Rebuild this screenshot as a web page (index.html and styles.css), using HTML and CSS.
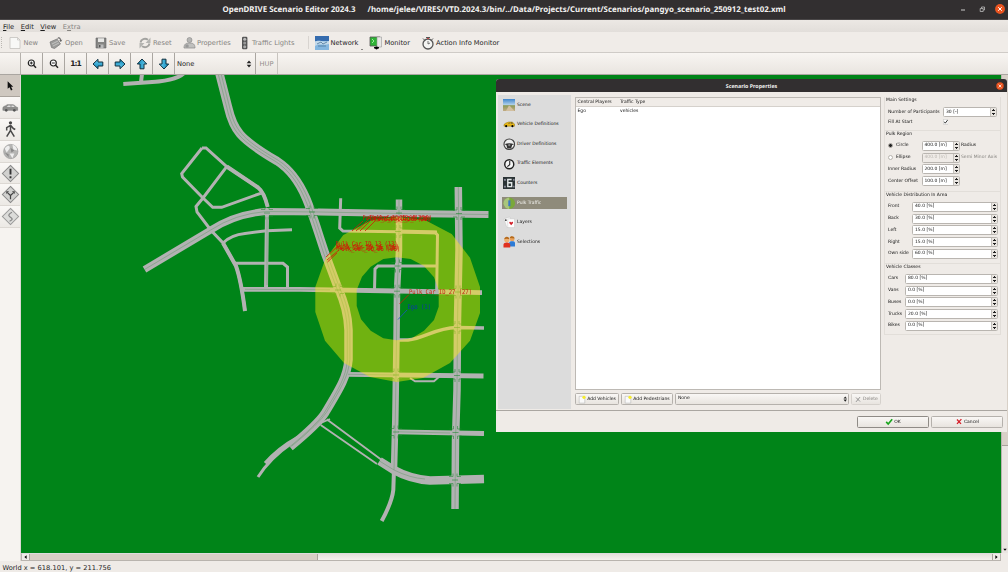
FILE: index.html
```html
<!DOCTYPE html>
<html lang="en">
<head>
<meta charset="utf-8">
<title>OpenDRIVE Scenario Editor</title>
<link rel="stylesheet" href="styles.css">
</head>
<body>
<svg class="defs" aria-hidden="true">
  <defs>
    <linearGradient id="cyan" x1="0" y1="0" x2="0" y2="1"><stop offset="0" stop-color="#6fd0f0"/><stop offset="1" stop-color="#0a86b8"/></linearGradient>
    <linearGradient id="sky" x1="0" y1="0" x2="0" y2="1"><stop offset="0" stop-color="#3f86cc"/><stop offset=".5" stop-color="#b4d3ea"/><stop offset=".55" stop-color="#8c9a58"/><stop offset="1" stop-color="#c2ab84"/></linearGradient>
  </defs>
  <symbol id="arrow" viewBox="0 0 12 12"><path d="M1 6 6 1.300V4h4.800v4H6v2.700Z" fill="url(#cyan)" stroke="#10303f" stroke-width="1"/></symbol>
  <symbol id="updown" viewBox="0 0 6 8"><path d="M3 .5 5.300 3.300H.7ZM3 7.500 5.300 4.700H.7Z" fill="#222"/></symbol>
  <symbol id="newdoc" viewBox="0 0 10 10"><path d="M1.500 1h7v8.500h-7Z" fill="#fafafa" stroke="#aaa" stroke-width=".6"/><circle cx="7.500" cy="2.300" r="2" fill="#f6ec2a"/></symbol>
</svg>
<div class="window">
  <header class="titlebar">
    <h1 class="window-title"><span>OpenDRIVE Scenario Editor 2024.3</span><span>/home/jelee/VIRES/VTD.2024.3/bin/../Data/Projects/Current/Scenarios/pangyo_scenario_250912_test02.xml</span></h1>
    <div class="window-buttons">
      <svg class="wb" viewBox="0 0 10 10"><path d="M3 6h4" stroke="#ddd" stroke-width=".9"/></svg>
      <svg class="wb" viewBox="0 0 10 10"><path d="M3.200 4.500h3v3h-3ZM4.500 4V3h3v3h-1" fill="none" stroke="#bbb" stroke-width=".8"/></svg>
      <svg class="wb" viewBox="0 0 10 10"><circle cx="5" cy="5" r="4.900" fill="#e95420"/><path d="m3.200 3.200 3.600 3.600m0-3.600L3.200 6.800" stroke="#fff" stroke-width="1"/></svg>
    </div>
  </header>
  <nav class="menubar"><span><u>F</u>ile</span><span><u>E</u>dit</span><span><u>V</u>iew</span><span class="off">E<u>x</u>tra</span></nav>
  <div class="toolbar">
    <i class="grip"></i>
    <span class="tool t-new off"><svg viewBox="0 0 14 14"><path d="M2 1.500h7.500L12 4v8.500H2Z" fill="#f8f8f6" stroke="#c4c2be" stroke-width=".8"/><path d="M9.500 1.500V4H12" fill="none" stroke="#c4c2be" stroke-width=".7"/></svg>New</span>
    <span class="tool t-open off"><svg viewBox="0 0 14 14"><path d="m1 6 7-3 3.500 5-6 4.500-3-1Z" fill="#9b9b99" stroke="#777" stroke-width=".7"/><path d="m3 8 6-3M4 10l6-3" stroke="#ccc" stroke-width=".8"/><path d="M8 3c1-3 4-2 4 1l1.300-.5L12 6l-2-1.500 1-.1C11 2.500 9.500 2 8 3" fill="#666"/></svg>Open</span>
    <span class="tool t-save off"><svg viewBox="0 0 14 14"><path d="M2 2h10v10H2Z" fill="#858583" stroke="#666" stroke-width=".6"/><path d="M4 2.300h6V6H4Z" fill="#e8e8e6"/><path d="M4.500 8.500h5V12h-5Z" fill="#bbb"/><path d="M5 9h1.500v2.500H5Z" fill="#555"/></svg>Save</span>
    <span class="tool t-reset off"><svg viewBox="0 0 14 14"><path d="M2.500 6.500C3 3 7 1.800 10 3.800M11.500 7.500C11 11 7 12.300 4 10.300" fill="none" stroke="#a3a3a0" stroke-width="1.900"/><path d="M12.500 1.500V7H7.600ZM1.500 12.500V7h5Z" fill="#b5b5b2"/></svg>Reset</span>
    <span class="tool t-prop off"><svg viewBox="0 0 14 14"><circle cx="7.500" cy="4" r="2.500" fill="#b5b5b3" stroke="#888" stroke-width=".6"/><path d="M2 12c0-4 2-5 5.500-5S13 8 13 12Z" fill="#c0c0be" stroke="#888" stroke-width=".7"/><circle cx="5" cy="10" r="1.800" fill="#999"/></svg>Properties</span>
    <span class="tool t-light off"><svg viewBox="0 0 14 14"><rect x="4" y=".8" width="5.400" height="12.400" rx="1.200" fill="#555"/><circle cx="6.700" cy="3.300" r="1.500" fill="#bbb"/><circle cx="6.700" cy="7" r="1.500" fill="#999"/><circle cx="6.700" cy="10.700" r="1.500" fill="#aaa"/></svg>Traffic Lights</span>
    <i class="sep"></i>
    <span class="tool t-net"><svg viewBox="0 0 14 14"><path d="M0 0h14v14H0Z" fill="#84b6df"/><path d="M0 0h14v5H0Z" fill="#366cae"/><path d="M0 6c4-3 8 1 14-1v3c-5 2-9-1-14 2Z" fill="#c3d9ea"/><path d="m2 8 4-2 2 2 4-2M3 10h8" fill="none" stroke="#4b7699" stroke-width=".8"/></svg>Network</span>
    <i class="drop"></i>
    <span class="tool t-mon"><svg viewBox="0 0 14 14"><path d="M1 1h10v9H1Z" fill="#2fb336" stroke="#555" stroke-width=".8"/><path d="m3 3 2 2-2 2" fill="none" stroke="#baf5b8" stroke-width=".8"/><path d="M8 1h4.500v10H8Z" fill="#e7e7e5" stroke="#999" stroke-width=".6"/><path d="M5 11h5v1.500H5Z" fill="#111"/><circle cx="7.500" cy="12" r="1.400"/></svg>Monitor</span>
    <span class="tool t-act"><svg viewBox="0 0 14 14"><circle cx="7" cy="8" r="5" fill="#f4f4f2" stroke="#555" stroke-width="1.300"/><path d="M7 8V5M7 8l2-1" stroke="#555" stroke-width=".8"/><path d="M7 1v2" stroke="#d22" stroke-width="1.300"/><path d="m2 2.500 2 2m8-2-2 2M5 1.500h4" stroke="#555" stroke-width="1"/></svg>Action Info Monitor</span>
  </div>
  <div class="viewbar">
    <i class="vpad"></i>
    <button class="vb"><svg viewBox="0 0 12 12"><circle cx="5.300" cy="5" r="3" fill="#fff" stroke="#222" stroke-width="1.200"/><path d="M7.600 7.300 10 9.800" stroke="#222" stroke-width="1.500"/><path d="M3.800 5h3M5.300 3.500v3" stroke="#111" stroke-width=".9"/></svg></button>
    <button class="vb"><svg viewBox="0 0 12 12"><circle cx="5.300" cy="5" r="3" fill="#fff" stroke="#222" stroke-width="1.200"/><path d="M7.600 7.300 10 9.800" stroke="#222" stroke-width="1.500"/><path d="M3.800 5h3" stroke="#111" stroke-width=".9"/></svg></button>
    <button class="vb"><b>1:1</b></button>
    <button class="vb"><svg><use href="#arrow"/></svg></button>
    <button class="vb"><svg class="r180"><use href="#arrow"/></svg></button>
    <button class="vb"><svg class="r90"><use href="#arrow"/></svg></button>
    <button class="vb"><svg class="r270"><use href="#arrow"/></svg></button>
    <div class="vcombo"><span>None</span><svg class="ud"><use href="#updown"/></svg></div>
    <div class="hup">HUP</div>
  </div>
  <main class="main">
    <aside class="palette">
      <div class="pb on"><svg viewBox="0 0 20 20"><path d="M7 5.500v8l2-1.600 1.500 3.300 1.600-.8-1.500-3.200h2.300Z" fill="#111"/></svg></div>
      <div class="pb"><svg viewBox="0 0 20 20"><path d="M2 10.500c0-2 3-1.800 4.500-3.500h6c2 0 2.500 2.500 5 3v3H2Z" fill="#8d8d8b" stroke="#777" stroke-width=".6"/><path d="M6 9.500 7.500 8H10v1.500ZM11 8h2l1.500 1.500H11Z" fill="#ddd"/><circle cx="5.500" cy="13" r="1.400" fill="#555"/><circle cx="14" cy="13" r="1.400" fill="#555"/></svg></div>
      <div class="pb"><svg viewBox="0 0 20 20"><circle cx="10" cy="3" r="1.700" fill="#444"/><path d="M10 5v6L6 17.500M10 11l4 6.500M9.500 6 6 8v3M10.500 6l2.500 3 2 1" fill="none" stroke="#4a4a4a" stroke-width="1.600"/></svg></div>
      <div class="pb"><svg viewBox="0 0 20 20"><circle cx="10.300" cy="10" r="7.500" fill="#b5b5b3" stroke="#999" stroke-width=".7"/><path d="M4 7c3-5 6-3 5 0L6 11ZM12 3c4 1 5 4 5 6l-4-1ZM9 12l5 0-2 5Z" fill="#eee"/><path d="m10 6 4 3-3 2ZM4 11l4 2 0 3Z" fill="#888"/></svg></div>
      <div class="pb"><svg viewBox="0 0 20 20"><path d="m10 1.500 8.500 8.500-8.500 8.500L1.500 10Z" fill="#d1d1cf" stroke="#888" stroke-width="1.100"/><path d="M10 5v6M10 13v2" stroke="#333" stroke-width="2"/></svg></div>
      <div class="pb"><svg viewBox="0 0 20 20"><path d="m10 1.500 8.500 8.500-8.500 8.500L1.500 10Z" fill="#d1d1cf" stroke="#888" stroke-width="1.100"/><path d="M10 15v-4L6.800 8M10 11l3.200-3" fill="none" stroke="#444" stroke-width="1.300"/><path d="M5.500 6.500h3L5.500 9.500ZM14.500 6.500h-3l3 3Z" fill="#444"/></svg></div>
      <div class="pb"><svg viewBox="0 0 20 20"><path d="m10 1.500 8.500 8.500-8.500 8.500L1.500 10Z" fill="#dcdcda" stroke="#999" stroke-width="1.100"/><path d="M9 15c5-2 2-3.500 0-5s0-3 2.500-4.500" fill="none" stroke="#888" stroke-width="1.300"/></svg></div>
    </aside>
    <section class="view">
      <div class="view-row">
        <svg class="map" viewBox="21 75 980 478">
          <defs>
            <path id="hw" d="M219.300 73 228 107C231 120 234 127 240 134S255 148 277 161C291 170 300 184 306 198S316 226 325 253L338 288C345 303 348 315 348.500 330V360C347 377 340 388 325 413Q318 424 290 447"/>
            <path id="ew" d="M144.500 269.500 210.700 230Q235 214 266 211.500L320 212 400 213.500 488.500 214.500"/>
            <path id="nsa" d="M399 199.500V250L397 291 396.500 340 395.300 420 394 470"/>
            <path id="nsb" d="M458.300 187 459 250 457.500 320 457 390 455.500 440 455 509"/>
            <path id="sb" d="M379.500 461 394 470Q410 479 430 480.500L484 479"/>
          </defs>
          <g class="road">
            <path class="w4" d="M123.300 84 145 82.600Q178 81 185 72M142 74 141 82"/>
            <use href="#hw" class="w9"/><use href="#ew" class="w7"/><use href="#nsa" class="w6"/><use href="#nsb" class="w8"/><use href="#sb" class="w9"/>
            <path class="w3" d="M298 437Q278 448 265 463M292 443Q270 458 258 477"/>
            <g class="w3">
              <path d="M202 148 181.700 173.500 182.500 177 203 198 212.700 207.300H221.700L260.700 193.300M202 148H206L226.700 166.500 258 187.500Q264 192 267.700 207"/>
              <path d="M226.700 166.700 203 198 196 206.500 197 212 210.700 230 223 243 236 266Q241 280 245 311"/>
              <path d="M223 243Q231 235 245 233.500L266.700 230.700 292 229.800M235 263.300 283 263.300 287.500 267V288"/>
              <path d="M340.700 198.300 339.700 228 343 231 435 232.300 437.500 235 436.700 290M436 266H378L375 269 374.500 290"/>
            </g>
            <path class="w4" d="M226.700 166.500 258 187.500Q264 192 267.700 207M223 243 236 266Q241 280 245 311M267 213 266 289M399 231.500 437 232.500"/>
            <path class="w5" d="M242 289.300H300L397 291 482 292.700"/>
            <path class="w3h" d="M398 340H408C425 338 435 328 456.700 327.400L484 328"/>
            <path class="w5" d="M347 374.300 483.500 376M397 431.800 484 433.500"/>
            <path class="w2" d="M410 378 415 381.200H434L440 376"/>
            <path class="w2" d="M326.700 419.300 381.700 460M320.700 425 377 464M315 427 322 422.500 330 419"/>
            <path class="w4" d="M394 469 393.300 490Q392 502 381.700 521"/>
          </g>
          <g class="lane">
            <use href="#hw" transform="translate(-1.200 .6)"/><use href="#ew"/><use href="#nsa"/><use href="#nsb"/>
            <use href="#hw" transform="translate(1.400 -.6)"/>
            <path d="M379.500 461 394 470Q410 478 425 479"/>
            <path d="M348 374.300 395 375M398 431.800 450 433M245 289.300 330 289.800M267 217V285"/>
          </g>
          <g class="cross">
            <g transform="translate(399 213)"><path id="x" d="M-6-3.500H-2V-6.500M6-3.500H2V-6.500M-6 3.500H-2V6.500M6 3.500H2V6.500M-3 0H3"/></g>
            <use href="#x" transform="translate(459 213.500)"/><use href="#x" transform="translate(398 231.500)"/><use href="#x" transform="translate(397.500 266)"/>
            <use href="#x" transform="translate(397 291.200)"/><use href="#x" transform="translate(458 292)"/><use href="#x" transform="translate(457 327.500)"/>
            <use href="#x" transform="translate(396 375)"/><use href="#x" transform="translate(457 375.500)"/><use href="#x" transform="translate(396 432)"/>
            <use href="#x" transform="translate(455.500 432.500)"/><use href="#x" transform="translate(455 480)"/><use href="#x" transform="translate(338 290)"/>
            <use href="#x" transform="translate(312 212)"/><use href="#x" transform="translate(267 213)"/>
          </g>
          <path class="ring" fill-rule="evenodd" d="M315.300 287 325.300 259 343.300 235 371.700 220 396.700 217 425 220 451.700 234 470 257.700 480 287V313L470 340.700 450 363 423 378 396.700 382 370 377 344 363 325 340.700 315.300 312ZM356.700 290 362 276.700 370.700 266.700 383.300 259 396.700 257.300 410.700 259 424 266 434 277.300 438.700 290V306.700L434 320 424 330.700 411.700 338.300 396.700 340.300 383.300 338.300 370.700 330.700 361 319.300 356.700 306Z"/>
          <g class="leaders"><path d="M352 231 363 221M356 231 367 221M360 231 370 221M365 231 375 221M326 257 338 246M327 260 339 250M327.500 262 337 253M399.500 304 409 294.500"/><path class="blue" d="M398 319.500 407 310"/></g>
          <g class="labels">
            <text x="362.500" y="220" textLength="62" lengthAdjust="spacingAndGlyphs">Pulk_Car_ID_12 (12)</text>
            <text x="367" y="220.800" textLength="64" lengthAdjust="spacingAndGlyphs">Pulk_Car_ID_20 (20)</text>
            <text x="370" y="219.700" textLength="62" lengthAdjust="spacingAndGlyphs">Pulk_Car_ID_18 (18)</text>
            <text x="374" y="221.200" textLength="56" lengthAdjust="spacingAndGlyphs">Pulk_Car_ID_9 (9)</text>
            <text x="335.500" y="245.700" textLength="62" lengthAdjust="spacingAndGlyphs">Pulk_Car_ID_13 (13)</text>
            <text x="337" y="248.500" textLength="62" lengthAdjust="spacingAndGlyphs">Pulk_Car_ID_16 (16)</text>
            <text x="338" y="250.500" textLength="62" lengthAdjust="spacingAndGlyphs">Pulk_Car_ID_26 (26)</text>
            <text x="336" y="249.500" textLength="62" lengthAdjust="spacingAndGlyphs">Pulk_Car_ID_10 (10)</text>
            <text class="thin" x="409" y="293.700" textLength="63" lengthAdjust="spacingAndGlyphs">Pulk_Car_ID_27 (27)</text>
            <text class="ego" x="407.500" y="309" textLength="23.500" lengthAdjust="spacingAndGlyphs">Ego (1)</text>
          </g>
        </svg>
        <div class="vscroll"><i class="vthumb"></i><svg class="varrow" viewBox="0 0 7 7"><path d="M1.500 2.500h4l-2 2.500Z"/></svg></div>
      </div>
      <div class="hscroll"><svg class="harrow" viewBox="0 0 8 8"><path d="M5.500 1.500v5L2.500 4Z"/></svg><i class="hthumb"></i><i class="htrack"></i><svg class="harrow" viewBox="0 0 8 8"><path d="M2.500 1.500v5L5.500 4Z"/></svg></div>
    </section>
  </main>
  <footer class="status">World x = 618.101, y = 211.756</footer>

  <div class="dialog">
    <div class="dtitle"><span>Scenario Properties</span><svg viewBox="0 0 8 8"><circle cx="4" cy="4" r="3.700" fill="#e95420"/><path d="m2.600 2.600 2.800 2.800m0-2.800L2.600 5.400" stroke="#fff" stroke-width=".8"/></svg></div>
    <div class="dbody">
      <div class="pages">
        <div class="page"><svg viewBox="0 0 13 13"><path d="M0 0h13v12.500H0Z" fill="url(#sky)"/><path d="m6 7 1 0 5 5.500H3Z" fill="#d2bf9f"/></svg><span>Scene</span></div>
        <div class="page"><svg viewBox="0 0 13 13"><path d="M1 7.500C1 5.500 4 5 6 4.200h3.500l2.500 2V8.500H1Z" fill="#e6b617" stroke="#8f7313" stroke-width=".5"/><path d="M5 5.800h2V4.800ZM8 4.800h1.500l1 1H8Z" fill="#444"/><circle cx="3.300" cy="8.500" r="1.100"/><circle cx="9.800" cy="8.500" r="1.100"/></svg><span>Vehicle Definitions</span></div>
        <div class="page"><svg viewBox="0 0 13 13"><circle cx="6.500" cy="6.500" r="5.500" fill="#eee" stroke="#444" stroke-width="1.200"/><path d="M1.500 6.500c3-1.500 7-1.500 10 0l-2 .8-1 3.700h-4l-1-3.700Z" fill="#333"/><circle cx="6.500" cy="7.500" r="1.200" fill="#888"/></svg><span>Driver Definitions</span></div>
        <div class="page"><svg viewBox="0 0 13 13"><circle cx="6.500" cy="6.500" r="4.700" fill="#f6f6f6" stroke="#222" stroke-width="1.500"/><path d="M7 3v4L4.500 9" fill="none" stroke="#222" stroke-width="1.100"/></svg><span>Traffic Elements</span></div>
        <div class="page"><svg viewBox="0 0 13 13"><path d="M0 0h13v12.500H0Z" fill="#2b3436"/><path d="M9 2.500H5v7.500h4V6H5" fill="none" stroke="#e2e7e8" stroke-width="1.500"/><path d="M1 2h2v2H1Zm0 7h2v2H1Zm9.500-7h1.500v2h-1.500Zm0 7h1.500v2h-1.500Z" fill="#889"/></svg><span>Counters</span></div>
        <div class="page sel"><svg viewBox="0 0 13 13"><circle cx="6.500" cy="6.500" r="6" fill="#7aa83a"/><path d="M6.500.5a6 6 0 0 0 0 12Z" fill="#a9c57c"/><path d="M5.500 3.500h2.200v6H5.500Z" fill="#3c79c2"/></svg><span>Pulk Traffic</span></div>
        <div class="page"><svg viewBox="0 0 13 13"><path d="m1 3 6-2 3 9-6 2Z" fill="#fafafa" stroke="#bbb" stroke-width=".4"/><path d="M5 3h7v9H5Z" fill="#fff" stroke="#bbb" stroke-width=".4"/><path d="m8.500 9.500-2-2.300c0-1.500 1.700-1.500 2-.3.300-1.200 2-1.200 2 .3Z" fill="#d3202a"/><path d="m3 3 1 1.500-1 .8-1-1Z"/></svg><span>Layers</span></div>
        <div class="page"><svg viewBox="0 0 13 13"><circle cx="9.500" cy="3" r="2.500" fill="#e8a15a"/><path d="M6.500 11V7c0-2 6-2 6 0v4Z" fill="#2c7bd6"/><circle cx="4" cy="4" r="2.700" fill="#f0b070"/><path d="M1.300 3.500c0-3.500 5.400-3.500 5.400 0C5 2.500 3 2.500 1.300 3.500M7 2c0-2.500 5-2.500 5 .5" fill="#b46a1d"/><path d="M.5 12V9c0-3 7-3 7 0v3Z" fill="#e0301e"/></svg><span>Selections</span></div>
      </div>
      <div class="center">
        <div class="list">
          <div class="lhead"><span>Central Players</span><span>Traffic Type</span></div>
          <div class="lrow"><span>Ego</span><span>vehicles</span></div>
        </div>
        <div class="actions">
          <button class="btn add1"><svg><use href="#newdoc"/></svg>Add Vehicles</button>
          <button class="btn add2"><svg><use href="#newdoc"/></svg>Add Pedestrians</button>
          <div class="btn combo"><span>None</span><svg class="ud"><use href="#updown"/></svg></div>
          <button class="btn del off"><svg viewBox="0 0 10 10"><path d="m2.500 2.500 5 5m0-5.500-5 6" stroke="#888" stroke-width="1.100"/></svg>Delete</button>
        </div>
      </div>
      <div class="form">
        <section class="group h-main"><div class="gt">Main Settings</div>
          <div class="frow g-main"><span>Number of Participants</span><div class="spin">30 [-]<i></i></div></div>
          <div class="frow check g-main"><span>Fill At Start</span><svg class="cb" viewBox="0 0 6 6"><path d="M.3.300h5.400v5.400H.300Z" fill="#fff" stroke="#aaa" stroke-width=".5"/><path d="m1.300 3 1.200 1.500L5 1.200" fill="none" stroke="#222" stroke-width="1"/></svg></div>
        </section>
        <section class="group h-reg"><div class="gt">Pulk Region</div>
          <div class="frow g-reg"><span><i class="radio on"></i>Circle</span><div class="spin">400.0 [m]<i></i></div><span>Radius</span></div>
          <div class="frow g-reg"><span><i class="radio"></i>Ellipse</span><div class="spin dis">400.0 [m]<i></i></div><span class="off">Semi Minor Axis</span></div>
          <div class="frow g-reg"><span>Inner Radius</span><div class="spin">200.0 [m]<i></i></div></div>
          <div class="frow g-reg"><span>Center Offset</span><div class="spin">100.0 [m]<i></i></div></div>
        </section>
        <section class="group h-dist"><div class="gt">Vehicle Distribution In Area</div>
          <div class="frow g-dist"><span>Front</span><div class="spin">40.0 [%]<i></i></div></div>
          <div class="frow g-dist"><span>Back</span><div class="spin">30.0 [%]<i></i></div></div>
          <div class="frow g-dist"><span>Left</span><div class="spin">15.0 [%]<i></i></div></div>
          <div class="frow g-dist"><span>Right</span><div class="spin">15.0 [%]<i></i></div></div>
          <div class="frow g-dist"><span>Own side</span><div class="spin">60.0 [%]<i></i></div></div>
        </section>
        <section class="group h-cls"><div class="gt">Vehicle Classes</div>
          <div class="frow g-cls"><span>Cars</span><div class="spin">80.0 [%]<i></i></div></div>
          <div class="frow g-cls"><span>Vans</span><div class="spin">0.0 [%]<i></i></div></div>
          <div class="frow g-cls"><span>Buses</span><div class="spin">0.0 [%]<i></i></div></div>
          <div class="frow g-cls"><span>Trucks</span><div class="spin">20.0 [%]<i></i></div></div>
          <div class="frow g-cls"><span>Bikes</span><div class="spin">0.0 [%]<i></i></div></div>
        </section>
      </div>
    </div>
    <div class="dfoot">
      <button class="btn ok"><svg viewBox="0 0 10 10"><path d="m1.500 5.500 2.500 2.700 5-6" fill="none" stroke="#18a51c" stroke-width="2"/></svg>OK</button>
      <button class="btn cancel"><svg viewBox="0 0 10 10"><path d="m2.500 2.500 5 5.500m.5-6L2.500 8" stroke="#d6202a" stroke-width="1.600"/></svg>Cancel</button>
    </div>
  </div>
</div>
</body>
</html>
```
FILE: styles.css
```css
* { box-sizing: border-box; }
body { margin: 0; overflow: hidden; font: 6.700px/8px "DejaVu Sans", sans-serif; color: #1e1e1e; text-rendering: geometricPrecision; }
button { font: inherit; color: inherit; margin: 0; padding: 0; border: 0; background: none; }
svg { display: block; flex: none; }
i { flex: none; }
.defs { position: absolute; width: 0; height: 0; }
.off { color: #85837f; }
.window { position: relative; width: 1008px; height: 572px; display: flex; flex-direction: column; background: #efebe7; overflow: hidden; }

.titlebar { height: 20px; background: #322f30; display: flex; align-items: center; justify-content: center; position: relative; color: #f2f2f0; border-bottom: 1px solid #4a4748; padding-top: 1px; }
.window-title { margin: 0; width: 563px; display: flex; justify-content: space-between; font: 700 7.900px/10px "Noto Sans", sans-serif; white-space: pre; }
.window-buttons { position: absolute; right: 3px; top: 4px; display: flex; gap: 8.500px; }
.wb { width: 10px; height: 10px; }

.menubar { height: 12px; background: linear-gradient(#ece8e4, #e2deda); display: flex; align-items: center; padding: 2px 0 0 3px; gap: 6.600px; }
.menubar u { text-underline-offset: .5px; text-decoration-thickness: .6px; }

.toolbar { height: 21px; display: flex; align-items: center; background: #f0ece8; border-bottom: 1px solid #cfcbc7; padding-top: 1px; }
.grip { width: 2px; height: 11px; margin-left: 1px; border-left: 1.500px dotted #bbb7b2; }
.tool { display: flex; align-items: center; gap: 2px; white-space: nowrap; height: 14px; }
.tool svg { width: 14px; height: 14px; }
.t-new { margin-left: 4.500px; width: 41.500px; }
.t-open { width: 45px; }
.t-save { width: 44px; gap: 1px; }
.t-reset { width: 44px; gap: 1px; }
.t-prop { width: 56px; gap: 1px; }
.t-light { width: 70px; gap: 0; }
.sep { width: 1px; height: 13px; background: #d8d4d0; margin-right: 6px; }
.t-net { width: 46px; gap: 1.500px; }
.drop { margin: 14px 6px 0 0; border: 1.500px solid transparent; border-top-color: #222; border-bottom: 0; }
.t-mon { width: 52px; gap: 1.500px; }
.t-act { gap: 1px; }

.viewbar { height: 22px; display: flex; background: linear-gradient(#f8f5f2, #e9e5e0); border-bottom: 1px solid #aaa6a1; }
.vpad { width: 21px; border-right: 1px solid #b5b1ac; }
.vb { width: 22px; display: grid; place-items: center; border-right: 1px solid #aaa6a1; }
.vb svg { width: 12px; height: 12px; }
.vb b { font: 700 7.500px "DejaVu Sans", sans-serif; letter-spacing: -.9px; color: #222; }
.r180 { transform: rotate(180deg); }
.r90 { transform: rotate(90deg); }
.r270 { transform: rotate(-90deg); }
.vcombo { width: 81px; display: flex; align-items: center; justify-content: space-between; padding: 0 3px 0 2px; border-right: 1px solid #aaa6a1; }
.ud { width: 6px; height: 8px; }
.hup { width: 22px; display: grid; place-items: center; color: #8f8c88; border-right: 1px solid #c8c4bf; }

.main { height: 486px; display: flex; }
.palette { width: 21px; background: #f6f3f0; border-right: 1px solid #ddd9d4; }
.pb { height: 21.900px; display: grid; place-items: center; border-bottom: 1px solid #dcd8d3; background: linear-gradient(#faf8f6, #ece9e5); }
.pb.on { background: #cfc8c0; border-bottom-color: #a9a39c; }
.pb svg { width: 19px; height: 19px; }
.view { flex: 1; display: flex; flex-direction: column; }
.view-row { height: 478px; display: flex; }
.map { width: 980px; height: 478px; background: #008418; }
.vscroll { width: 7px; background: #e9e5e1; border-left: 1px solid #b9b4ae; display: flex; flex-direction: column; justify-content: space-between; }
.vthumb { height: 371px; background: #d8d0c7; border-bottom: 1px solid #a7a19a; }
.varrow { width: 6px; height: 7px; }
.hscroll { height: 8px; width: 980px; display: flex; background: #f0ece8; border: 1px solid #b9b4ae; border-top-color: #ddd; }
.harrow { width: 7px; height: 6px; }
.hthumb { width: 289px; background: #d8cfc6; border: solid #aaa49d; border-width: 0 1px; }
.htrack { flex: 1; background: linear-gradient(#e4e0dc, #f5f2ef); border-right: 1px solid #aaa49d; }
.status { height: 11px; padding: 2.500px 0 0 2.500px; }

.road { fill: none; stroke: #b2b2b2; }
.w9 { stroke-width: 8.500; }
.w8 { stroke-width: 7.500; }
.w7 { stroke-width: 7; }
.w6 { stroke-width: 6.500; }
.w5 { stroke-width: 4.800; }
.w4 { stroke-width: 4; }
.w3h { stroke-width: 3.500; }
.w3 { stroke-width: 3; }
.w2 { stroke-width: 1.900; }
.lane { fill: none; stroke: #4d9357; stroke-width: .5; opacity: .75; }
.cross { fill: none; stroke: #1f8a30; stroke-width: .7; opacity: .8; }
.ring { fill: rgba(255, 236, 8, .44); }
.leaders { fill: none; stroke: #d01c08; stroke-width: .8; }
.leaders .blue { stroke: #1956c0; }
.labels { font: 6.500px "DejaVu Sans Mono", monospace; fill: #d41208; }
.labels .thin { fill: #c02a10; }
.labels .ego { fill: #0c35b0; }

.dialog { position: absolute; left: 496px; top: 79px; width: 511px; height: 353px; display: flex; flex-direction: column; background: #efebe7; border-radius: 3px 3px 0 0; font-size: 4.500px; line-height: 6px; color: #161616; overflow: hidden; }
.dtitle { height: 13px; background: #322f30; color: #eee; display: grid; place-items: center; position: relative; font: 700 5.300px/7px "Noto Sans", sans-serif; padding-top: 1px; }
.dtitle svg { position: absolute; right: 3px; top: 2.500px; width: 8px; height: 8px; }
.dbody { height: 318px; display: flex; padding-top: 3px; }
.pages { width: 73px; height: 314px; margin-left: 2px; background: #dcdcdc; padding: 0 4px; }
.page { height: 12px; margin-bottom: 7.600px; display: flex; align-items: center; gap: 2px; padding-left: .5px; white-space: nowrap; }
.page:first-child { margin-top: 4px; }
.page svg { width: 12.500px; height: 12.500px; }
.page span { padding-top: 1.400px; }
.page.sel { background: #8f8b7b; color: #f0f0ec; }
.center { width: 306px; margin: 2px 0 0 4px; display: flex; flex-direction: column; gap: 3px; }
.list { height: 293px; background: #fff; border: 1px solid #bdb9b4; }
.lhead, .lrow { display: grid; grid-template-columns: 42.500px 1fr; padding: 1px 0 0 1.500px; height: 8px; align-items: center; }
.lhead { background: #f0ece8; border-bottom: 1px solid #d5d1cc; height: 9px; padding-top: 2px; }
.actions { display: flex; gap: 2px; height: 12px; }
.btn { display: flex; align-items: center; justify-content: center; gap: 1px; border: 1px solid #b5b1ac; border-radius: 1.500px; background: linear-gradient(#f9f7f5, #e8e4df); white-space: nowrap; height: 12px; line-height: 7.500px; }
.btn svg { width: 8px; height: 9px; }
.add1 { width: 44px; }
.add2 { width: 52px; }
.combo { width: 174px; justify-content: space-between; padding: 0 1px 0 2px; }
.combo .ud { width: 4.500px; height: 6px; }
.del { width: 30px; border-color: #d5d1cc; }
.form { width: 117px; margin-left: 3px; padding-top: 2px; }
.group { padding: 0 2px 0 3px; border: solid #e2ded9; border-width: 0 1px 1px; }
.h-main { height: 33.500px; }
.h-reg { height: 61px; }
.h-dist { height: 72px; }
.h-cls { height: 71px; }
.gt { height: 7px; line-height: 8px; margin-bottom: 2.600px; margin-left: -2px; }
.frow { display: grid; align-items: center; height: 11.700px; white-space: nowrap; }
.frow.check { height: 7.500px; }
.frow > span { display: flex; align-items: center; padding-top: 1px; }
.g-main { grid-template-columns: 55px 54px; }
.g-main .cb { width: 5.500px; height: 5.500px; margin-left: -.5px; }
.g-reg { grid-template-columns: 32.500px 38.500px 1fr; column-gap: 1px; }
.g-dist { grid-template-columns: 24px 86px; }
.g-cls { grid-template-columns: 17px 93px; }
.spin { height: 10px; background: #fff; border: 1px solid #b9b5b0; border-radius: 1.500px; padding-left: 2px; display: flex; align-items: center; justify-content: space-between; overflow: hidden; line-height: 8px; padding-top: 1px; }
.spin.dis { background: #efebe7; color: #bbb7b2; }
.spin i { width: 6px; height: 8px; margin-top: -1px; background: conic-gradient(from 143deg at 50% 0, #222 74deg, transparent 0) 50% 1px / 3px 2px no-repeat, conic-gradient(from -37deg at 50% 100%, #222 74deg, transparent 0) 50% 5px / 3px 2px no-repeat, #eae6e1; border-left: 1px solid #c5c1bc; }
.radio { width: 5px; height: 5px; border: 1px solid #b5b1ac; border-radius: 50%; background: #fff; margin: -1px 3px 0 0; }
.radio.on { background: #222; }
.dfoot { height: 22px; border-top: 1px solid #aaa6a1; display: flex; justify-content: flex-end; gap: 2px; padding: 4.500px 4px 0 0; }
.ok { width: 72px; border-color: #8f8b86; }
.cancel { width: 72px; }
```
